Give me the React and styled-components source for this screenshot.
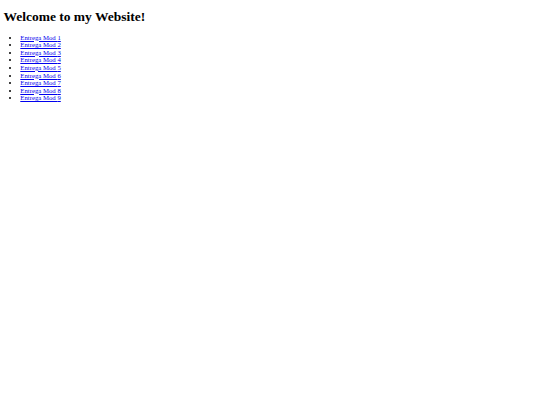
import React from 'react';
import styled, { createGlobalStyle } from 'styled-components';

const GlobalStyle = createGlobalStyle`
  body {
    margin: 0;
    padding: 3.4px;
    background: #ffffff;
    font-family: "Liberation Serif", "Times New Roman", serif;
    font-size: 6.75px;
    color: #000000;
  }
`;

const Title = styled.h1`
  font-size: 13.5px;
  line-height: 15px;
  font-weight: bold;
  margin: 5.6px 0 9.6px;
`;

const List = styled.ul`
  list-style: disc;
  margin: 0;
  padding-left: 16.9px;
`;

const Item = styled.li`
  line-height: 7.6px;
`;

const Link = styled.a`
  color: #0000ee;
  text-decoration: underline;
`;

const mods = [1, 2, 3, 4, 5, 6, 7, 8, 9];

export default function App() {
  return (
    <>
      <GlobalStyle />
      <Title>Welcome to my Website!</Title>
      <List>
        {mods.map((n) => (
          <Item key={n}>
            <Link href={`#mod${n}`}>Entrega Mod {n}</Link>
          </Item>
        ))}
      </List>
    </>
  );
}
